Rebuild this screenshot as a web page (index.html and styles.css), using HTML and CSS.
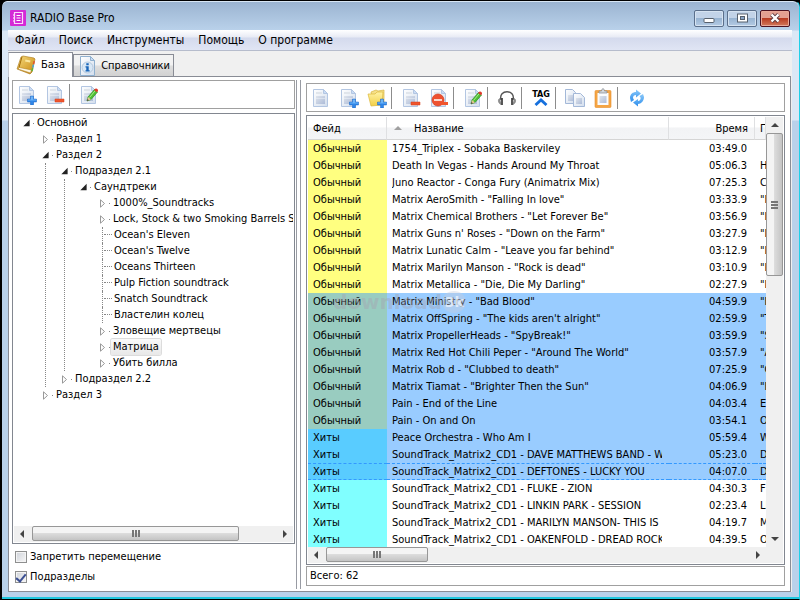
FILE: index.html
```html
<!DOCTYPE html>
<html lang="ru">
<head>
  <meta charset="UTF-8">
  <meta name="viewport" content="width=device-width, initial-scale=1">
  <title>RADIO Base Pro</title>
  <link rel="stylesheet" href="styles.css">
</head>
<body>
  <!-- shared icon shapes -->
  <svg class="defs" aria-hidden="true">
    <defs>
      <linearGradient id="paper" x1="0" y1="0" x2="1" y2="1">
        <stop offset="0" stop-color="#ffffff"/><stop offset="1" stop-color="#d3deed"/>
      </linearGradient>
      <linearGradient id="lines" x1="0" y1="0" x2="1" y2="1">
        <stop offset="0" stop-color="#dfe4ec"/><stop offset="1" stop-color="#adbcd8"/>
      </linearGradient>
      <linearGradient id="gold" x1="0" y1="0" x2="1" y2="1">
        <stop offset="0" stop-color="#f6dc80"/><stop offset="1" stop-color="#c8860c"/>
      </linearGradient>
      <linearGradient id="folder" x1="0" y1="0" x2="0" y2="1">
        <stop offset="0" stop-color="#fff3a6"/><stop offset="1" stop-color="#f2cf45"/>
      </linearGradient>
      <linearGradient id="sky" x1="0" y1="0" x2="0" y2="1">
        <stop offset="0" stop-color="#8ccafa"/><stop offset="1" stop-color="#2c8ceb"/>
      </linearGradient>
      <symbol id="doc" viewBox="0 0 20 20">
        <path d="M2.500 1.500h10l4 4v13h-14z" fill="url(#paper)" stroke="#b3c6e2"/>
        <path d="M12.500 1.500v4h4z" fill="#c9dcf5" stroke="#b3c6e2"/>
        <path d="M5 4h6v2H5z" fill="#e0e5eb"/>
        <path d="M5 8h9v8H5z" fill="url(#lines)"/>
        <path d="M5 10.500h9" stroke="#f1f5fa" stroke-width=".5"/>
      </symbol>
      <symbol id="plus" viewBox="0 0 20 20">
        <path d="M13.500 11h3v3h3v3h-3v3h-3v-3h-3v-3h3z" fill="#2f86e8" stroke="#1f67c4" stroke-width=".5"/>
        <path d="M14 11.500h2v3h3v1h-8v-1h3z" fill="#6db4f7"/>
      </symbol>
      <symbol id="minus" viewBox="0 0 20 20">
        <path d="M10 14h9v3h-9z" fill="#f0552c" stroke="#d63e18" stroke-width=".5"/>
      </symbol>
      <symbol id="pencil" viewBox="0 0 20 20">
        <path d="M8 16l1-4 6.500-7.500 3 2.500-6.500 7.500z" fill="#4fc034" stroke="#2c8d22" stroke-width=".7"/>
        <path d="M8 16l1-4 3 2.500z" fill="#e8c795"/>
        <path d="M8 16l.5-2 1.300 1.200z" fill="#333"/>
        <path d="M10.500 12.500l5.800-7" stroke="#a6ec8c" stroke-width="1"/>
        <path d="M15.500 4.500c1-2 4-1 3.500 1.500l-1 1.200-3-2.200z" fill="#e03a2c"/>
      </symbol>
    </defs>
  </svg>

  <div class="window">
    <header class="titlebar">
      <svg class="app-icon" viewBox="0 0 16 16" aria-hidden="true">
        <rect width="16" height="16" rx="1" fill="#d429d6"/>
        <path d="M4.500 2.500h8v11h-8z" fill="none" stroke="#fbd9fb" stroke-width="1.200"/>
        <path d="M6.500 5.500h4M6.500 8h4M6.500 10.500h4M3 5h1M3 8h1M3 11h1" stroke="#fff"/>
      </svg>
      <h1 class="title">RADIO Base Pro</h1>
      <div class="window-buttons">
        <button class="win-btn" type="button" aria-label="Свернуть">
          <svg viewBox="0 0 16 12"><rect x="3" y="6.500" width="10" height="4" rx="1" fill="#fff" stroke="#57606c"/></svg>
        </button>
        <button class="win-btn" type="button" aria-label="Развернуть">
          <svg viewBox="0 0 16 12"><rect x="3.500" y="2" width="10" height="8" fill="#fff" stroke="#57606c"/><rect x="6.500" y="4.500" width="4" height="3" fill="#8aa5c6" stroke="#57606c"/></svg>
        </button>
        <button class="win-btn win-close" type="button" aria-label="Закрыть">
          <svg viewBox="0 0 16 12"><path d="M4.500 2.500l7 7M11.500 2.500l-7 7" stroke="#5a3a40" stroke-width="4"/><path d="M4.500 2.500l7 7M11.500 2.500l-7 7" stroke="#fff" stroke-width="2.400"/></svg>
        </button>
      </div>
    </header>

    <div class="client">
      <nav class="menu">
        <a href="#file">Файл</a>
        <a href="#search">Поиск</a>
        <a href="#tools">Инструменты</a>
        <a href="#help">Помощь</a>
        <a href="#about">О программе</a>
      </nav>

      <div class="tabs" role="tablist">
        <button class="tab tab-active" type="button" role="tab" aria-selected="true">
          <svg viewBox="0 0 20 20" aria-hidden="true">
            <path d="M1 14l4-12 2-1 11 2 1 1-3 13-2 2z" fill="url(#gold)" stroke="#a87412" stroke-width=".6"/>
            <path d="M2 14l1.500-1.500 12 2.500-1 3z" fill="#fff8e3" stroke="#a87412" stroke-width=".5"/>
            <path d="M6 1.800L3 12.500" stroke="#a36c09" stroke-width="1"/>
            <path d="M9.500 4.500l5 1-.5 2-5-1z" fill="#fae7a0"/>
            <path d="M17.500 6l1.500.3-.7 3-1.500-.3z" fill="#e2552f"/>
            <path d="M16.700 9.500l1.500.3-.7 3-1.500-.3z" fill="#45a7db"/>
            <path d="M15.900 13l1.500.3-.7 3-1.500-.3z" fill="#57b53c"/>
          </svg>
          База
        </button>
        <button class="tab" type="button" role="tab" aria-selected="false">
          <svg viewBox="0 0 20 20" aria-hidden="true">
            <path d="M2.500.5h10l4 4v15h-14z" fill="url(#paper)" stroke="#8fb0cf"/>
            <path d="M12.500.5v4h4z" fill="#c9dcf5" stroke="#8fb0cf"/>
            <circle cx="9.500" cy="11.500" r="5.500" fill="#d9e8f6" stroke="#a9bfd6" stroke-width=".8"/>
            <path d="M8.300 7.200h2.400v2H8.300zM7.500 10.200h3.200v4h1v1.300H7.500v-1.300h.8v-2.700h-.8z" fill="#1764b8"/>
          </svg>
          Справочники
        </button>
      </div>

      <main class="panel">
        <section class="sidebar">
          <div class="toolbar">
            <button class="tool" type="button" aria-label="Добавить раздел"><svg><use href="#doc"/><use href="#plus"/></svg></button>
            <button class="tool" type="button" aria-label="Удалить раздел"><svg><use href="#doc"/><use href="#minus"/></svg></button>
            <span class="sep"></span>
            <button class="tool" type="button" aria-label="Изменить раздел"><svg><use href="#doc"/><use href="#pencil"/></svg></button>
          </div>

          <div class="tree-box">
            <ul class="tree">
              <li><div class="node open"><span>Основной</span></div>
                <ul>
                  <li><div class="node closed"><span>Раздел 1</span></div></li>
                  <li><div class="node open"><span>Раздел 2</span></div>
                    <ul class="guide">
                      <li><div class="node open"><span>Подраздел 2.1</span></div>
                        <ul class="guide">
                          <li><div class="node open"><span>Саундтреки</span></div>
                            <ul>
                              <li><div class="node closed"><span>1000%_Soundtracks</span></div></li>
                              <li><div class="node closed"><span>Lock, Stock &amp; two Smoking Barrels So</span></div></li>
                              <li><div class="node leaf"><span>Ocean's Eleven</span></div></li>
                              <li><div class="node leaf"><span>Ocean's Twelve</span></div></li>
                              <li><div class="node leaf"><span>Oceans Thirteen</span></div></li>
                              <li><div class="node leaf"><span>Pulp Fiction soundtrack</span></div></li>
                              <li><div class="node leaf"><span>Snatch Soundtrack</span></div></li>
                              <li><div class="node leaf"><span>Властелин колец</span></div></li>
                              <li><div class="node closed"><span>Зловещие мертвецы</span></div></li>
                              <li><div class="node closed current"><span>Матрица</span></div></li>
                              <li><div class="node closed"><span>Убить билла</span></div></li>
                            </ul>
                          </li>
                        </ul>
                      </li>
                      <li><div class="node closed"><span>Подраздел 2.2</span></div></li>
                    </ul>
                  </li>
                  <li><div class="node closed"><span>Раздел 3</span></div></li>
                </ul>
              </li>
            </ul>
            <div class="hscroll">
              <i class="arrow left"></i>
              <div class="track"><div class="thumb thumb-tree"></div></div>
              <i class="arrow right"></i>
            </div>
          </div>

          <label class="check"><input type="checkbox"> Запретить перемещение</label>
          <label class="check"><input type="checkbox" checked> Подразделы</label>
        </section>

        <div class="splitter"></div>

        <section class="content">
          <div class="toolbar">
            <button class="tool" type="button" aria-label="Новая запись"><svg><use href="#doc"/></svg></button>
            <button class="tool" type="button" aria-label="Добавить запись"><svg><use href="#doc"/><use href="#plus"/></svg></button>
            <button class="tool" type="button" aria-label="Добавить папку">
              <svg viewBox="0 0 20 20">
                <path d="M4 4l5-2 2 1 6-1v12l-11 3z" fill="#f5e08a" stroke="#d9b640" stroke-width=".7"/>
                <path d="M1 6h7l2-2h6l-1 13-11 1z" fill="url(#folder)" stroke="#dcb73b" stroke-width=".7"/>
                <use href="#plus"/>
              </svg>
            </button>
            <span class="sep"></span>
            <button class="tool" type="button" aria-label="Удалить запись"><svg><use href="#doc"/><use href="#minus"/></svg></button>
            <button class="tool" type="button" aria-label="Стоп-лист">
              <svg viewBox="0 0 20 20"><use href="#doc"/>
                <circle cx="9" cy="12" r="6" fill="#ee5130" stroke="#d23c1d" stroke-width=".7"/>
                <path d="M5 11h8v2H5z" fill="#fbd6cb"/><path d="M12 14h7v3h-7z" fill="#f0552c"/>
              </svg>
            </button>
            <span class="sep"></span>
            <button class="tool" type="button" aria-label="Изменить запись"><svg><use href="#doc"/><use href="#pencil"/></svg></button>
            <span class="sep"></span>
            <button class="tool" type="button" aria-label="Прослушать">
              <svg viewBox="0 0 20 20">
                <path d="M4 12C1 1 19 1 16 12" fill="none" stroke="#555" stroke-width="1.400"/>
                <path d="M2.500 10.500c-2 1.500-1 5 1.500 6zM17.500 10.500c2 1.500 1 5-1.500 6z" fill="#999" stroke="#666" stroke-width=".6"/>
                <path d="M5 10v7M15 10v7" stroke="#222" stroke-width="1.500"/>
              </svg>
            </button>
            <span class="sep"></span>
            <button class="tool tag" type="button">TAG
              <svg class="chevron" viewBox="0 0 14 8" aria-hidden="true"><path d="M1.500 7L7 2l5.500 5" fill="none" stroke="#1670dd" stroke-width="2.800"/></svg>
            </button>
            <span class="sep"></span>
            <button class="tool" type="button" aria-label="Копировать">
              <svg viewBox="0 0 20 20">
                <path d="M.5 1.500h7l3 3v11h-10z" fill="url(#paper)" stroke="#a3b8d8"/><path d="M3 7h6v6H3z" fill="url(#lines)"/>
                <path d="M8.500 5.500h7l4 4v9h-11z" fill="url(#paper)" stroke="#a3b8d8"/><path d="M11 10h6v6h-6z" fill="url(#lines)"/>
              </svg>
            </button>
            <button class="tool" type="button" aria-label="Вставить">
              <svg viewBox="0 0 20 20">
                <rect x="2" y="2.500" width="16" height="17" rx="1" fill="#f5a544" stroke="#e58d2c" stroke-width=".6"/>
                <path d="M4.500 5h11v12h-11z" fill="#fafcff"/><path d="M6.500 8h7v7h-7z" fill="url(#lines)"/>
                <path d="M6 5V3h2.500c0-3 3-3 3 0H14v2z" fill="#d5d8dc" stroke="#82868d" stroke-width=".7"/>
              </svg>
            </button>
            <span class="sep"></span>
            <button class="tool" type="button" aria-label="Обновить">
              <svg viewBox="0 0 20 20">
                <path d="M3 10c0-4 3-6 6-6V1.500l5 4-5 4V7C7 7 6 8 6 10l1 2-3 2z" fill="url(#sky)"/>
                <path d="M17 9c0 4-3 7-6 7v2.500l-5-4 5-3.500v2c2 0 3-2 2.500-3.500L12.500 8l3.500-2z" fill="url(#sky)"/>
              </svg>
            </button>
          </div>

          <div class="grid-box">
            <div class="grid-main">
              <table class="grid">
                <colgroup><col class="col-fade"><col><col class="col-time"><col class="col-song"></colgroup>
                <thead>
                  <tr><th>Фейд</th><th class="sorted">Название</th><th class="time">Время</th><th>Песня</th></tr>
                </thead>
                <tbody>
                  <tr><td>Обычный</td><td><div>1754_Triplex - Sobaka Baskerviley</div></td><td class="time">03:49.0</td><td></td></tr>
                  <tr><td>Обычный</td><td><div>Death In Vegas - Hands Around My Throat</div></td><td class="time">05:06.3</td><td>Hands</td></tr>
                  <tr><td>Обычный</td><td><div>Juno Reactor - Conga Fury (Animatrix Mix)</div></td><td class="time">07:25.3</td><td>Conga</td></tr>
                  <tr><td>Обычный</td><td><div>Matrix AeroSmith - "Falling In love"</div></td><td class="time">03:33.9</td><td>"Falling</td></tr>
                  <tr><td>Обычный</td><td><div>Matrix Chemical Brothers - "Let Forever Be"</div></td><td class="time">03:56.9</td><td>"Let</td></tr>
                  <tr><td>Обычный</td><td><div>Matrix Guns n' Roses - "Down on the Farm"</div></td><td class="time">03:27.9</td><td>"Down</td></tr>
                  <tr><td>Обычный</td><td><div>Matrix Lunatic Calm - "Leave you far behind"</div></td><td class="time">03:12.9</td><td>"Leave</td></tr>
                  <tr><td>Обычный</td><td><div>Matrix Marilyn Manson - "Rock is dead"</div></td><td class="time">03:10.9</td><td>"Rock</td></tr>
                  <tr><td>Обычный</td><td><div>Matrix Metallica - "Die, Die My Darling"</div></td><td class="time">02:27.9</td><td>"Die</td></tr>
                  <tr class="sel"><td>Обычный</td><td><div>Matrix Ministry - "Bad Blood"</div></td><td class="time">04:59.9</td><td>"Bad</td></tr>
                  <tr class="sel"><td>Обычный</td><td><div>Matrix OffSpring - "The kids aren't alright"</div></td><td class="time">02:59.9</td><td>"The</td></tr>
                  <tr class="sel"><td>Обычный</td><td><div>Matrix PropellerHeads - "SpyBreak!"</div></td><td class="time">03:59.9</td><td>"Spy</td></tr>
                  <tr class="sel"><td>Обычный</td><td><div>Matrix Red Hot Chili Peper - "Around The World"</div></td><td class="time">03:57.9</td><td>"Around</td></tr>
                  <tr class="sel"><td>Обычный</td><td><div>Matrix Rob d - "Clubbed to death"</div></td><td class="time">07:25.9</td><td>"Clubbed</td></tr>
                  <tr class="sel"><td>Обычный</td><td><div>Matrix Tiamat - "Brighter Then the Sun"</div></td><td class="time">04:06.9</td><td>"Brighter</td></tr>
                  <tr class="sel"><td>Обычный</td><td><div>Pain - End of the Line</div></td><td class="time">04:03.4</td><td>End</td></tr>
                  <tr class="sel"><td>Обычный</td><td><div>Pain - On and On</div></td><td class="time">03:54.1</td><td>On</td></tr>
                  <tr class="hit sel"><td>Хиты</td><td><div>Peace Orchestra - Who Am I</div></td><td class="time">05:59.4</td><td>Who</td></tr>
                  <tr class="hit sel"><td>Хиты</td><td><div>SoundTrack_Matrix2_CD1 - DAVE MATTHEWS BAND - WHEN</div></td><td class="time">05:23.0</td><td>DAVE</td></tr>
                  <tr class="hit sel focus"><td>Хиты</td><td><div>SoundTrack_Matrix2_CD1 - DEFTONES - LUCKY YOU</div></td><td class="time">04:07.0</td><td>DEFTONES</td></tr>
                  <tr class="hit"><td>Хиты</td><td><div>SoundTrack_Matrix2_CD1 - FLUKE - ZION</div></td><td class="time">04:30.3</td><td>FLUKE</td></tr>
                  <tr class="hit"><td>Хиты</td><td><div>SoundTrack_Matrix2_CD1 - LINKIN PARK - SESSION</div></td><td class="time">02:23.4</td><td>LINKIN</td></tr>
                  <tr class="hit"><td>Хиты</td><td><div>SoundTrack_Matrix2_CD1 - MARILYN MANSON- THIS IS</div></td><td class="time">04:19.7</td><td>MARILYN</td></tr>
                  <tr class="hit"><td>Хиты</td><td><div>SoundTrack_Matrix2_CD1 - OAKENFOLD - DREAD ROCK</div></td><td class="time">04:39.5</td><td>OAKENFOLD</td></tr>
                </tbody>
              </table>
              <div class="watermark">download<span>3k</span></div>
            </div>
            <div class="vscroll">
              <i class="arrow up"></i>
              <div class="vtrack"><div class="vthumb"></div></div>
              <i class="arrow down"></i>
            </div>
            <div class="hscroll">
              <i class="arrow left"></i>
              <div class="track"><div class="thumb thumb-grid"></div></div>
              <i class="arrow right"></i>
            </div>
          </div>

          <div class="status">Всего: 62</div>
        </section>
      </main>
    </div>
  </div>
</body>
</html>
```
FILE: styles.css
```css
* {
  box-sizing: border-box;
}

body {
  margin: 0;
  background: #000;
  color: #000;
  font-family: "DejaVu Sans Condensed", "DejaVu Sans", sans-serif;
  font-size: 11px;
  line-height: 16px;
}

button {
  font: inherit;
  color: inherit;
  padding: 0;
  border: 0;
  background: none;
}

ul {
  list-style: none;
  margin: 0;
  padding: 0;
}

.defs {
  position: absolute;
  width: 0;
  height: 0;
}

.window {
  display: flex;
  flex-direction: column;
  height: 100vh;
  padding: 1px 7px 7px 6px;
  border: 1px solid #000;
  border-right: 1px solid #1fd0e8;
  border-left-width: 2px;
  border-radius: 7px 7px 0 0;
  background: linear-gradient(#9ab3d0, #b9d1ea 29px, #dbe8f6 30px, #dbe8f6 119px, #b9d1ea 120px);
  box-shadow: inset 0 1px #d8e6f4, inset 0 -2px #1fc6de;
}

/* title bar */
.titlebar {
  display: flex;
  align-items: center;
  gap: 4px;
  flex: 0 0 28px;
  padding: 4px 2px 0;
}

.app-icon {
  width: 16px;
  height: 16px;
}

.title {
  flex: 1;
  margin: 0;
  font-size: 12px;
  font-weight: normal;
}

.window-buttons {
  display: flex;
  gap: 3px;
}

.win-btn {
  display: grid;
  place-items: center;
  width: 30px;
  height: 17px;
  border: 1px solid #5b6f8b;
  border-radius: 2px;
  background: linear-gradient(#c2d3e8 45%, #98b4d2 50%, #b4cbe4);
  box-shadow: inset 0 0 0 1px #d6e3f1;
}

.win-btn svg {
  width: 16px;
  height: 12px;
}

.win-close {
  border-color: #4c1220;
  background: linear-gradient(#e3a091 45%, #b93c22 50%, #d27a5c);
  box-shadow: inset 0 0 0 1px #e8a898;
}

.client {
  flex: 1;
  display: flex;
  flex-direction: column;
  min-height: 0;
  background: #f0f0f0;
}

/* menu */
.menu {
  display: flex;
  gap: 14px;
  flex: 0 0 19px;
  padding: 0 7px;
  border-bottom: 1px solid #b6bccc;
  background: linear-gradient(#fff, #e8ebf5 35%, #d4daed 40%, #e0e5f4);
  font-size: 12px;
  line-height: 20px;
}

.menu a {
  color: #000;
  text-decoration: none;
}

/* tabs */
.tabs {
  display: flex;
  align-items: flex-end;
  flex: 0 0 26px;
}

.tab {
  display: flex;
  align-items: center;
  gap: 3px;
  height: 23px;
  padding: 0 3px 0 4px;
  border: 1px solid #898c95;
  border-bottom: 0;
  background: linear-gradient(#f2f2f2 45%, #dedede 50%, #d0d0d0);
}

.tab svg {
  width: 20px;
  height: 20px;
}

.tab-active {
  gap: 5px;
  height: 25px;
  padding: 0 7px;
  border-left-color: #c5c8d0;
  background: #fff;
  z-index: 1;
}

.panel {
  flex: 1;
  display: flex;
  min-height: 0;
  margin: -1px 1px 0 0;
  padding: 3px 5px 2px 3px;
  border: 1px solid #898c95;
  background: #fff;
}

.sidebar {
  display: flex;
  flex-direction: column;
  flex: 0 0 283px;
  min-width: 0;
}

.splitter {
  flex: 0 0 5px;
  margin: 0 5px 0 1px;
  border: solid #989ba3;
  border-width: 0 1px;
}

.content {
  display: flex;
  flex-direction: column;
  flex: 1;
  min-width: 0;
  padding: 3px 0;
}

/* toolbars */
.toolbar {
  display: flex;
  align-items: center;
  flex: 0 0 29px;
  border: 1px solid #a0a0a0;
}

.tool {
  display: grid;
  place-items: center;
  width: 28px;
  height: 26px;
}

.tool svg {
  width: 20px;
  height: 20px;
}

.sep {
  width: 1px;
  height: 22px;
  margin-right: 5px;
  background: #8c8c8c;
}

.tag {
  align-content: center;
  font-weight: bold;
  font-size: 9px;
  line-height: 8px;
}

.tool .chevron {
  width: 14px;
  height: 8px;
}

/* tree */
.tree-box,
.grid-box {
  border: 1px solid #828790;
}

.tree-box {
  display: flex;
  flex-direction: column;
  flex: 1;
  min-height: 0;
  margin: 4px 0 3px;
  padding: 1px;
}

.tree {
  flex: 1;
  min-height: 0;
  overflow: hidden;
  padding-left: 8px;
  white-space: nowrap;
}

.tree ul {
  margin-left: 4px;
  padding-left: 14px;
  border-left: 1px solid transparent;
}

.tree .guide {
  border-left: 1px dotted #888;
}

.node {
  display: flex;
  align-items: center;
  height: 16px;
}

.node::before {
  content: "";
  width: 9px;
  height: 9px;
  flex: none;
}

.node::after {
  content: "";
  order: 1;
  flex: none;
  width: 1px;
  height: 1px;
  margin: 0 1px 0 2px;
  background: #888;
}

.node span {
  order: 2;
  padding: 0 2px;
}

.open::before {
  clip-path: polygon(85% 15%, 85% 85%, 15% 85%);
  background: #222;
}

.closed::before {
  background: url("data:image/svg+xml,%3Csvg xmlns='http://www.w3.org/2000/svg' viewBox='0 0 9 9'%3E%3Cpath d='M2.5 .8v7.400L6.500 4.500z' fill='%23fff' stroke='%23999'/%3E%3C/svg%3E");
}

.node.leaf::before {
  width: 5px;
  height: 16px;
  margin-left: 4px;
  border-left: 1px dotted #888;
}

.node.leaf::after {
  width: 8px;
  margin: 0 0 0 -4px;
  border-top: 1px dotted #888;
  background: none;
}

.current span {
  border-radius: 2px;
  background: linear-gradient(#fafafa, #e8e8e8);
  box-shadow: 0 0 0 1px #dcdcdc;
}

/* scrollbars */
.hscroll {
  display: flex;
  flex: 0 0 16px;
  background: #f0f0f0;
}

.arrow {
  flex: 0 0 16px;
  display: grid;
  place-items: center;
}

.arrow::before {
  content: "";
  border: 4px solid transparent;
}

.left::before {
  border-right-color: #444;
  border-left-width: 0;
}

.right::before {
  border-left-color: #444;
  border-right-width: 0;
}

.up::before {
  border-bottom-color: #444;
  border-top-width: 0;
}

.down::before {
  border-top-color: #444;
  border-bottom-width: 0;
}

.track,
.vtrack {
  flex: 1;
}

.thumb,
.vthumb {
  display: grid;
  place-items: center;
  border: 1px solid #979797;
  border-radius: 2px;
}

.thumb {
  height: 15px;
  margin-left: 2px;
  background: linear-gradient(#f4f4f4 45%, #dcdcdc 50%, #c4c4c4);
}

.thumb::before {
  content: "";
  width: 8px;
  height: 7px;
  background: repeating-linear-gradient(90deg, #777 0 2px, transparent 2px 3px);
}

.thumb-tree {
  width: 84%;
}

.thumb-grid {
  width: 24%;
}

.vthumb {
  height: 36%;
  background: linear-gradient(90deg, #f4f4f4 45%, #dcdcdc 50%, #c4c4c4);
}

.vthumb::before {
  content: "";
  width: 7px;
  height: 8px;
  background: repeating-linear-gradient(#777 0 2px, transparent 2px 3px);
}

.vscroll {
  display: flex;
  flex-direction: column;
  background: #f0f0f0;
}

/* check boxes */
.check {
  display: flex;
  align-items: center;
  gap: 3px;
  height: 20px;
  padding-left: 3px;
}

.check:last-child {
  margin-bottom: 2px;
}

.check input {
  appearance: none;
  display: grid;
  place-items: center;
  width: 12px;
  height: 12px;
  margin: 0;
  border: 1px solid #8e8f8f;
  background: linear-gradient(135deg, #cfd3da, #f6f6f6);
  box-shadow: inset 0 0 0 1px #f4f4f4;
}

.check input:checked::before {
  content: "";
  width: 4px;
  height: 8px;
  border: solid #3b4f93;
  border-width: 0 2px 2px 0;
  transform: rotate(40deg);
}

/* track list */
.grid-box {
  display: grid;
  grid-template: minmax(0, 1fr) 16px / minmax(0, 1fr) 17px;
  flex: 1;
  min-height: 0;
  margin: 3px 0 1px;
  padding: 1px;
  background: linear-gradient(#f0f0f0, #f0f0f0) content-box;
}

.grid-main {
  position: relative;
  overflow: hidden;
  background: #fff;
}

.grid {
  width: 100%;
  table-layout: fixed;
  border-collapse: separate;
  border-spacing: 0;
}

.col-fade {
  width: 79px;
}

.col-time {
  width: 86px;
}

.col-song {
  width: 11px;
}

.grid th,
.grid td {
  height: 17px;
  padding: 0 0 0 5px;
  overflow: hidden;
  line-height: 17px;
  font-weight: normal;
  text-align: left;
  white-space: nowrap;
}

.grid th {
  height: 23px;
  border-right: 1px solid #dfe0e2;
  border-bottom: 1px solid #d5d5d5;
  background: linear-gradient(#fff 45%, #f2f3f5 50%, #f4f5f7);
}

.grid .time {
  padding-right: 8px;
  text-align: right;
}

.grid th.time {
  padding-right: 6px;
}

.grid td div {
  margin-right: 7px;
  overflow: hidden;
}

.sorted::before {
  content: "";
  display: inline-block;
  margin: 0 12px 2px 2px;
  border: 4px solid transparent;
  border-top-width: 0;
  border-bottom-color: #a0a0a0;
}

.grid td:first-child {
  background: #ffff80;
}

.grid .hit td:first-child {
  background: #80ffff;
}

.grid .sel td {
  background: #99ccff;
}

.grid .sel td:first-child {
  background: #99ccc0;
}

.grid .hit.sel td:first-child {
  background: #59ccff;
}

.grid .focus td {
  height: 17px;
  line-height: 15px;
  border: dashed #3399ff;
  border-width: 1px 0;
}

/* stamp lying over the list */
.watermark {
  position: absolute;
  top: 174px;
  left: 25px;
  display: flex;
  align-items: center;
  color: rgba(165, 165, 178, .45);
  font-family: "DejaVu Sans", sans-serif;
  font-size: 20px;
  font-weight: bold;
  line-height: 22px;
}

.watermark span {
  width: 24px;
  height: 22px;
  border-radius: 50%;
  background: rgba(200, 205, 220, .4);
  color: rgba(255, 255, 255, .6);
  font-size: 14px;
  text-align: center;
}

.status {
  flex: 0 0 20px;
  padding: 0 3px;
  border: 1px solid #a0a0a0;
  line-height: 18px;
}
```
